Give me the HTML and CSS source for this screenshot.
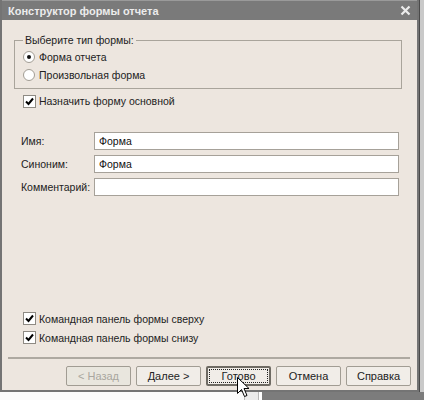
FILE: index.html
```html
<!DOCTYPE html>
<html>
<head>
    <title>Конструктор формы отчета</title>
    <link rel="stylesheet" href="styles.css">
</head>
<body>
    <div class="screen">
        <div class="top-row">
            <div class="window">
                <div class="titlebar">
                    <span class="title">Конструктор формы отчета</span>
                    <svg class="close" width="11" height="11" viewBox="0 0 11 11">
                        <path d="M1.5 1.5 L9.5 9.5 M9.5 1.5 L1.5 9.5" stroke="#ececec" stroke-width="2.2" fill="none"/>
                    </svg>
                </div>
                <div class="client">
                    <fieldset class="group">
                        <legend>Выберите тип формы:</legend>
                        <div class="option"><span class="radio checked"></span>Форма отчета</div>
                        <div class="option"><span class="radio"></span>Произвольная форма</div>
                    </fieldset>
                    <div class="check main-check">
                        <span class="box"><svg width="9" height="9" viewBox="0 0 9 9"><path d="M1 4.5 L3.5 7 L8 1.5" stroke="#000" stroke-width="2" fill="none"/></svg></span>
                        Назначить форму основной
                    </div>
                    <div class="fields">
                        <div class="field">
                            <span class="label">Имя:</span>
                            <div class="input">Форма</div>
                        </div>
                        <div class="field">
                            <span class="label">Синоним:</span>
                            <div class="input">Форма</div>
                        </div>
                        <div class="field">
                            <span class="label">Комментарий:</span>
                            <div class="input"></div>
                        </div>
                    </div>
                    <div class="spacer"></div>
                    <div class="check">
                        <span class="box"><svg width="9" height="9" viewBox="0 0 9 9"><path d="M1 4.5 L3.5 7 L8 1.5" stroke="#000" stroke-width="2" fill="none"/></svg></span>
                        Командная панель формы сверху
                    </div>
                    <div class="check">
                        <span class="box"><svg width="9" height="9" viewBox="0 0 9 9"><path d="M1 4.5 L3.5 7 L8 1.5" stroke="#000" stroke-width="2" fill="none"/></svg></span>
                        Командная панель формы снизу
                    </div>
                    <div class="separator"></div>
                    <div class="buttons">
                        <div class="btn disabled">&lt; Назад</div>
                        <div class="btn">Далее &gt;</div>
                        <div class="btn default"><span class="focus">Готово</span></div>
                        <div class="btn">Отмена</div>
                        <div class="btn">Справка</div>
                    </div>
                    <!-- mouse pointer over the default button -->
                    <svg class="cursor" width="13" height="21" viewBox="0 0 13 21">
                        <path d="M0.5 0.5 L0.5 16.5 L4.5 12.5 L7.5 19.5 L10 18.5 L7 11.5 L12 11.5 Z" fill="#fff" stroke="#000" stroke-width="1"/>
                    </svg>
                </div>
            </div>
            <div class="edge"></div>
        </div>
        <div class="below">
            <div class="desk"></div>
            <div class="scroll"></div>
            <div class="backdrop"></div>
        </div>
    </div>
</body>
</html>
```

FILE: styles.css
```css
body {
    margin: 0;
    padding: 0;
    background: #fff;
    font-family: "Liberation Sans", Arial, sans-serif;
    font-size: 10.5px;
    color: #222;
}
.screen {
    width: 424px;
    height: 400px;
    display: flex;
    flex-direction: column;
}
.top-row {
    display: flex;
}
.window {
    width: 416px;
    border: 2px solid #747474;
    border-top: none;
    background: #ede6df;
    display: flex;
    flex-direction: column;
}
.edge {
    width: 4px;
    border-left: 1px solid #4a4a4a;
    background: #c9c9c9;
}
.titlebar {
    height: 20px;
    background: #7a7a7a;
    border-top: 1px solid #9a9a9a;
    box-sizing: border-box;
    display: flex;
    align-items: center;
    justify-content: space-between;
    padding: 0 6px 0 6px;
}
.title {
    color: #ececec;
    font-weight: bold;
    font-size: 11px;
}
.client {
    height: 370px;
    display: flex;
    flex-direction: column;
    position: relative;
}
.group {
    margin: 13px 15px 0 12px;
    padding: 1px 8px 4px 8px;
    border: 1px solid #a9a49b;
}
.group legend {
    padding: 0 2px;
    margin-left: 0;
    line-height: 14px;
}
.option {
    height: 18px;
    display: flex;
    align-items: center;
    gap: 4px;
}
.radio {
    width: 10px;
    height: 10px;
    border: 1px solid #a29d94;
    border-radius: 50%;
    background: #fff;
    display: flex;
    align-items: center;
    justify-content: center;
}
.radio.checked::after {
    content: "";
    width: 4px;
    height: 4px;
    border-radius: 50%;
    background: #111;
}
.check {
    height: 19px;
    display: flex;
    align-items: center;
    gap: 3px;
    padding-left: 21px;
}
.main-check {
    margin-top: 3px;
    height: 18px;
}
.box {
    width: 11px;
    height: 11px;
    border: 1px solid #8e8a83;
    background: #fff;
    display: flex;
    align-items: center;
    justify-content: center;
}
.fields {
    margin-top: 22px;
    display: flex;
    flex-direction: column;
    gap: 5px;
    padding: 0 18px 0 19px;
}
.field {
    display: flex;
    align-items: center;
    height: 18px;
}
.label {
    width: 73px;
}
.input {
    flex: 1;
    height: 18px;
    box-sizing: border-box;
    border: 1px solid #a6a199;
    background: #fff;
    padding: 0 4px;
    line-height: 16px;
    color: #111;
}
.spacer {
    flex: 1;
}
.separator {
    height: 2px;
    margin: 10px 7px 0 6px;
    background: #aea9a1;
}
.buttons {
    display: flex;
    justify-content: flex-end;
    gap: 5px;
    margin-top: 7px;
    padding: 0 6px 4px 0;
}
.btn {
    width: 65px;
    height: 20px;
    box-sizing: border-box;
    border: 1px solid #a19c93;
    border-radius: 2px;
    background: #f1ede8;
    display: flex;
    align-items: center;
    justify-content: center;
    font-size: 11px;
}
.btn.disabled {
    color: #a9a69f;
    background: #e9e6de;
}
.btn.default {
    border: 2px solid #6e6a63;
    padding: 1px;
}
.focus {
    flex: 1;
    align-self: stretch;
    border: 1px dotted #222;
    display: flex;
    align-items: center;
    justify-content: center;
}
.cursor {
    position: absolute;
    left: 235px;
    top: 357px;
}
.below {
    flex: 1;
    display: flex;
}
.desk {
    width: 244px;
    background: #fbfbfb;
}
.scroll {
    width: 13px;
    border-left: 1px solid #b8b8b8;
    border-right: 1px solid #b8b8b8;
    background: #ececec;
}
.backdrop {
    flex: 1;
    margin-left: 3px;
    background: #7c7c7c;
}
```
